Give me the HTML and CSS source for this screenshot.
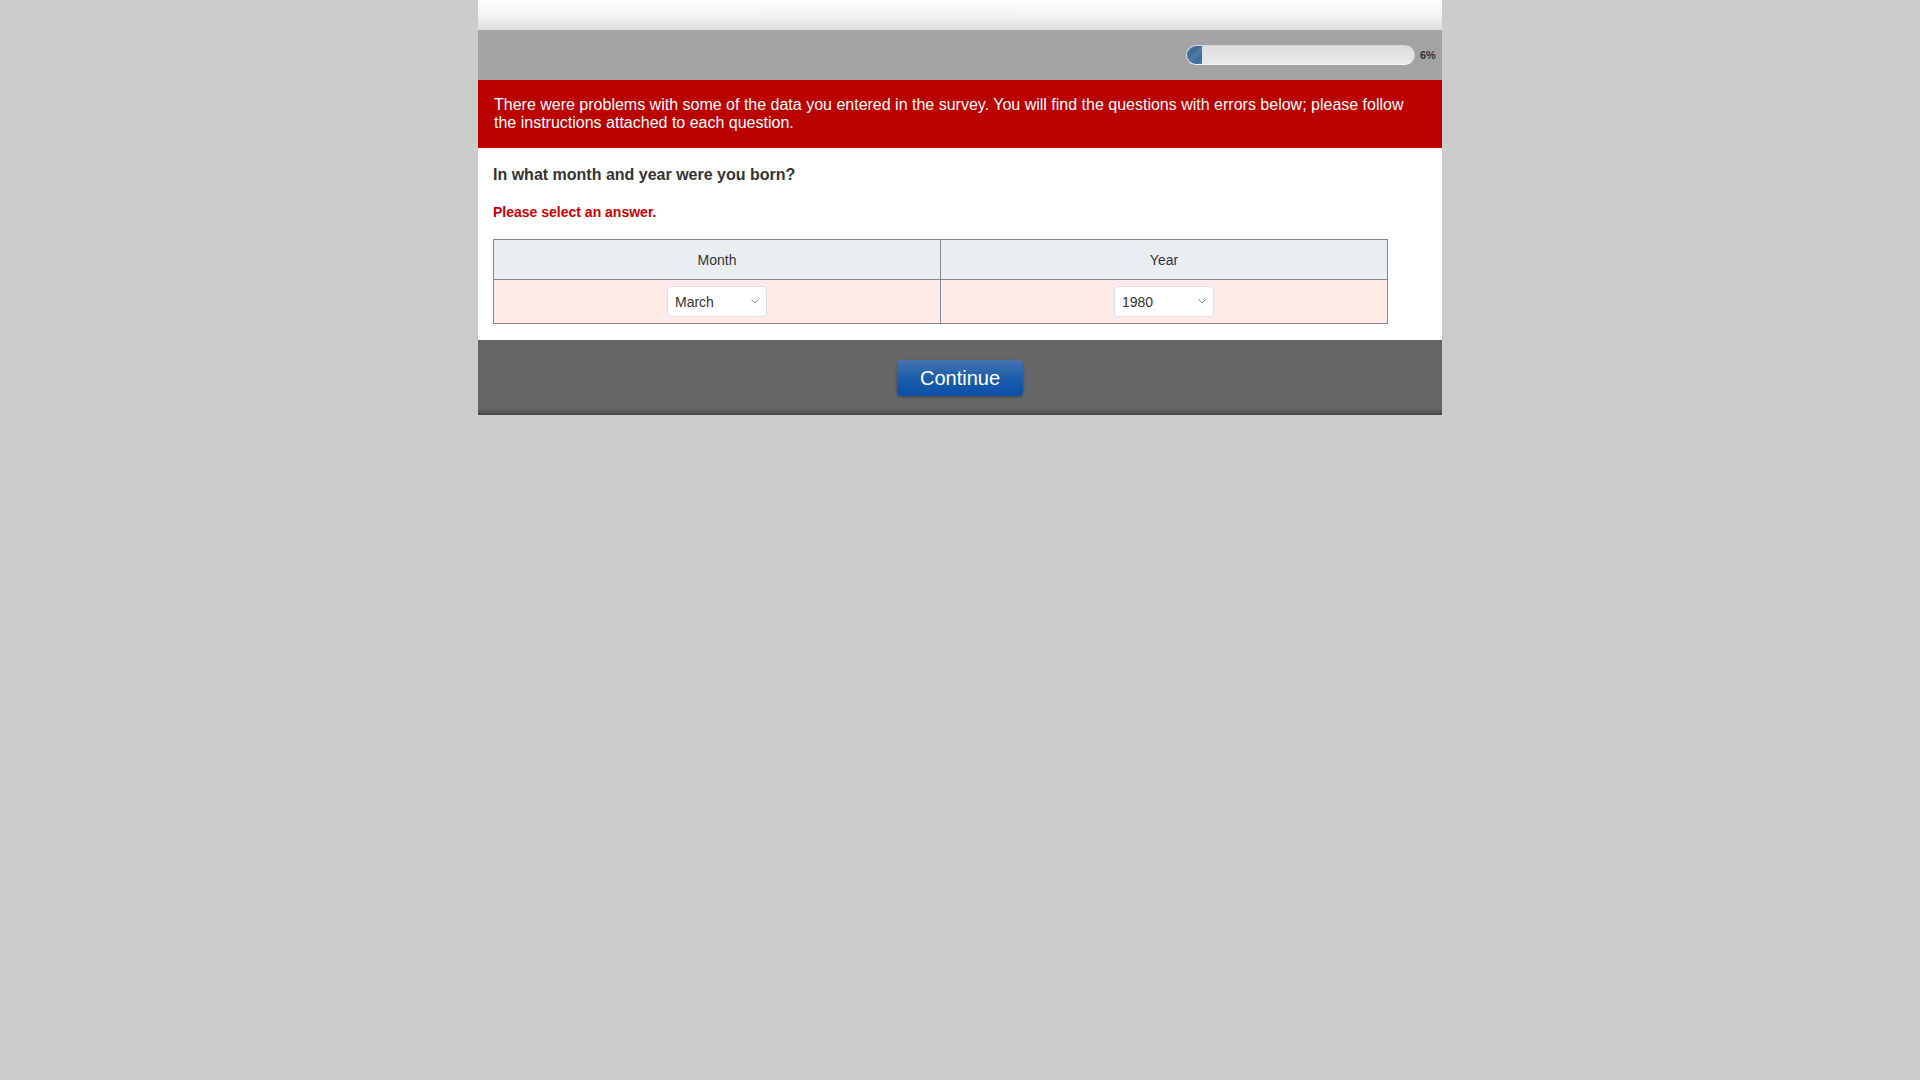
FILE: index.html
```html
<!DOCTYPE html>
<html lang="en">
<head>
<meta charset="utf-8">
<title>Survey</title>
<link rel="stylesheet" href="styles.css">
</head>
<body>
<div class="page">
  <div class="top"></div>
  <div class="progress-bar-row">
    <div class="progress">
      <div class="progress-fill" style="width:15px"></div>
    </div>
    <span class="progress-label">6%</span>
  </div>
  <div class="error-banner">There were problems with some of the data you entered in the survey. You will find the questions with errors below; please follow the instructions attached to each question.</div>
  <div class="content">
    <div class="question">In what month and year were you born?</div>
    <div class="error-msg">Please select an answer.</div>
    <table class="grid">
      <thead>
        <tr><th>Month</th><th>Year</th></tr>
      </thead>
      <tbody>
        <tr>
          <td>
            <div class="select"><span>March</span>
              <svg width="8" height="5" viewBox="0 0 8 5"><path d="M0.5 0.5 L4 4 L7.5 0.5" fill="none" stroke="#888" stroke-width="1"/></svg>
            </div>
          </td>
          <td>
            <div class="select"><span>1980</span>
              <svg width="8" height="5" viewBox="0 0 8 5"><path d="M0.5 0.5 L4 4 L7.5 0.5" fill="none" stroke="#888" stroke-width="1"/></svg>
            </div>
          </td>
        </tr>
      </tbody>
    </table>
  </div>
  <div class="footer">
    <button class="continue">Continue</button>
  </div>
</div>
</body>
</html>
```

FILE: styles.css
```css
html, body {
  margin: 0;
  padding: 0;
  background: #cccccc;
  font-family: "Liberation Sans", Arial, sans-serif;
  color: #333333;
}

.page {
  width: 964px;
  margin: 0 auto;
  background: #ffffff;
}

.top {
  height: 30px;
  background: linear-gradient(to bottom, #ffffff 0%, #f3f3f3 50%, #dedede 100%);
}

.progress-bar-row {
  height: 50px;
  background: #a3a3a3;
  display: flex;
  align-items: center;
  justify-content: flex-end;
  padding-right: 6px;
}

.progress {
  width: 227px;
  height: 18px;
  border: 1px solid #d8d8d8;
  border-bottom-color: #f6f6f6;
  border-radius: 10px;
  background: linear-gradient(to bottom, #dcdcdc 0%, #e6e6e6 60%, #e9e9e9 100%);
  overflow: hidden;
  display: flex;
}

.progress-fill {
  height: 100%;
  background-color: #3d6d9c;
  background-image: linear-gradient(135deg, rgba(255,255,255,0.08) 25%, transparent 25%, transparent 50%, rgba(255,255,255,0.08) 50%, rgba(255,255,255,0.08) 75%, transparent 75%);
  background-size: 14px 14px;
}

.progress-label {
  font-size: 11px;
  font-weight: bold;
  color: #333333;
  margin-left: 5px;
  width: 16px;
}

.error-banner {
  background: #bb0000;
  color: #ffffff;
  font-size: 16px;
  line-height: 18px;
  padding: 16px 16px 16px 16px;
}

.content {
  padding: 17px 15px 16px 15px;
}

.question {
  font-size: 16px;
  font-weight: bold;
  line-height: 20px;
  color: #333333;
}

.error-msg {
  margin-top: 17px;
  font-size: 14px;
  font-weight: bold;
  line-height: 20px;
  color: #cc0000;
}

.grid {
  margin-top: 17px;
  width: 895px;
  border-collapse: collapse;
  table-layout: fixed;
}

.grid th,
.grid td {
  border: 1px solid #888888;
  text-align: center;
  font-size: 14px;
  color: #333333;
}

.grid th {
  background: #e9eef1;
  font-weight: normal;
  height: 39px;
  padding: 0;
}

.grid td {
  background: #ffeaea;
  height: 43px;
  padding: 0;
}

.select {
  display: inline-flex;
  align-items: center;
  justify-content: space-between;
  box-sizing: border-box;
  width: 100px;
  height: 31px;
  padding: 0 7px 0 7px;
  background: #ffffff;
  border: 1px solid #e0e0e0;
  border-radius: 4px;
  font-size: 14px;
  color: #333333;
  vertical-align: middle;
}

.select svg {
  display: block;
}

.footer {
  height: 75px;
  background: linear-gradient(to bottom, #666666 0%, #666666 92%, #444444 100%);
  display: flex;
  justify-content: center;
  padding-top: 20px;
  box-sizing: border-box;
}

.continue {
  width: 126px;
  height: 36px;
  border: none;
  border-radius: 4px;
  background: linear-gradient(to bottom, #4474b0 0%, #1d5eaa 50%, #0a50a8 100%);
  color: #ffffff;
  font-family: "Liberation Sans", Arial, sans-serif;
  font-size: 20px;
  box-shadow: 0 1px 3px rgba(0,0,0,0.35);
  padding: 0;
  cursor: pointer;
}
```
